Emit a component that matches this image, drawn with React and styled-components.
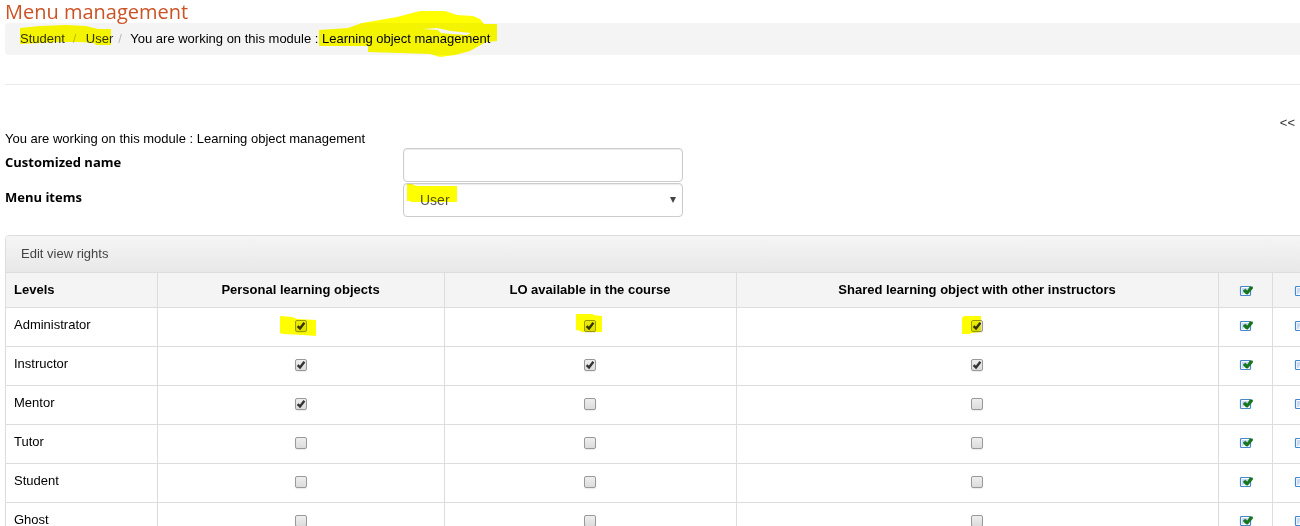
import React, { useState } from "react";
import styled, { createGlobalStyle } from "styled-components";

const GlobalStyle = createGlobalStyle`
  * {
    box-sizing: border-box;
  }
  body {
    margin: 0;
    background: #ffffff;
    color: #000000;
    font-family: "Liberation Sans", Arial, sans-serif;
    font-size: 13px;
    line-height: 20px;
  }
`;

const Page = styled.main`
  padding-left: 5px;
  overflow: hidden;
`;

const Title = styled.h1`
  position: relative;
  z-index: 1;
  margin: 0;
  font-family: "Open Sans", sans-serif;
  font-size: 20px;
  font-weight: 400;
  line-height: 23px;
  color: #cb5326;
`;

const Breadcrumb = styled.nav`
  position: relative;
  display: flex;
  padding: 6px 15px;
  border-radius: 4px 0 0 4px;
  background: #f4f4f4;
`;

const CrumbLink = styled.a`
  color: #333333;
  text-decoration: none;
`;

const Separator = styled.span`
  width: 21px;
  padding-left: ${(props) => (props.$tight ? "5px" : "8px")};
  color: #bbbbbb;
  &:last-of-type {
    width: 17px;
  }
`;

const Divider = styled.hr`
  height: 1px;
  margin: 29px 0 28px;
  border: 0;
  background: #eaeaea;
`;

const Collapse = styled.div`
  display: flex;
  justify-content: flex-end;
  padding-right: 5px;
  height: 15px;
`;

const CollapseLink = styled.a`
  color: #333333;
  line-height: 20px;
  text-decoration: none;
`;

const ModuleText = styled.p`
  margin: 0;
  padding-top: 2px;
  line-height: 18px;
`;

const FieldRow = styled.div`
  display: grid;
  grid-template-columns: 398px 280px;
  padding-bottom: 1px;
`;

const FieldLabel = styled.label`
  padding-top: 4px;
  font-family: "Open Sans", sans-serif;
  font-weight: 700;
`;

const Control = styled.div`
  position: relative;
  display: flex;
`;

const TextInput = styled.input`
  width: 100%;
  height: 34px;
  padding: 6px 12px;
  border: 1px solid #cccccc;
  border-radius: 4px;
  background: #ffffff;
  box-shadow: inset 0 1px 1px rgba(0, 0, 0, 0.08);
  color: #555555;
  font-family: "Liberation Sans", Arial, sans-serif;
  font-size: 14px;
`;

const Select = styled.select`
  width: 100%;
  height: 34px;
  padding: 6px 16px;
  appearance: none;
  border: 1px solid #cccccc;
  border-radius: 4px;
  background: #ffffff;
  box-shadow: inset 0 1px 1px rgba(0, 0, 0, 0.08);
  color: #555555;
  font-family: "Liberation Sans", Arial, sans-serif;
  font-size: 14px;
`;

const SelectArrow = styled.svg`
  position: absolute;
  top: 14px;
  right: 7px;
  width: 6px;
  height: 6px;
  fill: #444444;
  pointer-events: none;
`;

const Panel = styled.section`
  margin: 17px -28px 0 0;
  border: 1px solid #dddddd;
  border-radius: 4px;
`;

const PanelHeading = styled.h2`
  margin: 0;
  padding: 8px 15px;
  border-radius: 4px 4px 0 0;
  background: linear-gradient(#f5f5f5, #e8e8e8);
  color: #444444;
  font-size: 13px;
  font-weight: 400;
  line-height: 20px;
`;

const RightsTable = styled.table`
  width: 100%;
  border-collapse: collapse;
  table-layout: fixed;
`;

const Column = styled.col`
  width: ${(props) => props.$width || "auto"};
`;

const cellBorder = "1px solid #dddddd";

const HeadCell = styled.th`
  height: 35px;
  padding: ${(props) => (props.$icon ? "7px 8px 6px" : "6px 8px 7px")};
  border-top: ${cellBorder};
  border-left: ${cellBorder};
  background: #f4f4f4;
  text-align: ${(props) => (props.$left ? "left" : "center")};
  vertical-align: middle;
  &:first-child {
    border-left: 0;
  }
`;

const LevelCell = styled.th`
  height: 39px;
  padding: 7px 8px;
  border-top: ${cellBorder};
  font-weight: 400;
  text-align: left;
  vertical-align: top;
`;

const Cell = styled.td`
  padding: 0 0 4px;
  border-top: ${cellBorder};
  border-left: ${cellBorder};
  text-align: center;
  vertical-align: middle;
`;

const BoxWrap = styled.span`
  position: relative;
  display: inline-flex;
  vertical-align: middle;
`;

const Box = styled.input`
  width: 12px;
  height: 12px;
  margin: 0;
  appearance: none;
  border: 1px solid #999999;
  border-radius: 2px;
  background: linear-gradient(#eeeeee, #dcdcdc);
  box-shadow: 0 1px 1px rgba(0, 0, 0, 0.08);
`;

const Tick = styled.svg`
  position: absolute;
  top: 0;
  left: 0;
  width: 12px;
  height: 12px;
  fill: none;
  stroke: #333333;
  stroke-width: 2.4;
  pointer-events: none;
`;

const IconButton = styled.button`
  display: inline-flex;
  padding: 0;
  border: 0;
  background: none;
  vertical-align: middle;
`;

// Marker strokes let the content under them show through
const Marker = styled.svg`
  position: absolute;
  top: ${(props) => props.$top}px;
  left: ${(props) => props.$left}px;
  fill: #ffff00;
  mix-blend-mode: multiply;
  pointer-events: none;
`;

const columns = [
  "Personal learning objects",
  "LO available in the course",
  "Shared learning object with other instructors",
];

const levels = [
  { name: "Administrator", rights: [true, true, true] },
  { name: "Instructor", rights: [true, true, true] },
  { name: "Mentor", rights: [true, false, false] },
  { name: "Tutor", rights: [false, false, false] },
  { name: "Student", rights: [false, false, false] },
  { name: "Ghost", rights: [false, false, false] },
];

const boxMarkers = [
  { top: -4, left: -15, points: "0,0 12,1 17,3 36,4 36,20 23,19 3,18 0,17" },
  { top: -6, left: -8, points: "0,0 17,0 17,1 26,2 26,18 5,18 5,17 0,16" },
  { top: -4, left: -9, points: "0,2 2,0 19,0 19,16 9,17 8,18 0,18" },
];

const EmptyBox = () => (
  <>
    <rect x="3.5" y="1.5" width="10" height="9" rx="1" fill="#ffffff" stroke="#4488cb" strokeWidth="1.2" />
    <path d="M5 3h7v6H5z" fill="#c9d9f1" />
    <path d="M8 6h4v3H6z" fill="#e6eefa" />
  </>
);

const CheckAllIcon = () => (
  <svg width="16" height="12" viewBox="0 0 16 12">
    <EmptyBox />
    <path d="M6.6 5.2l2-1 1.8 1.9L13 1.8l2.6.1v1.5L10.6 9.2 9.2 9 6.6 6.4z" fill="#157a1c" stroke="#0c6314" strokeWidth="0.6" />
  </svg>
);

const UncheckAllIcon = () => (
  <svg width="16" height="12" viewBox="0 0 16 12">
    <EmptyBox />
  </svg>
);

const App = () => {
  const [rows, setRows] = useState(levels);

  const setRight = (row, col, value) => {
    setRows(
      rows.map((level, i) =>
        row === null || i === row
          ? { ...level, rights: level.rights.map((r, j) => (col === null || j === col ? value : r)) }
          : level
      )
    );
  };

  return (
    <Page>
      <GlobalStyle />
      <Title>Menu management</Title>
      <Breadcrumb aria-label="Breadcrumb">
        <CrumbLink href="#student">Student</CrumbLink>
        <Separator>/</Separator>
        <CrumbLink href="#user">User</CrumbLink>
        <Separator $tight>/</Separator>
        <div>You are working on this module : Learning object management</div>
        <Marker $top={2} $left={15} width="92" height="21">
          <polygon points="0,3 20,1 46,0 66,1 78,4 91,4 91,20 76,20 74,18 60,17 40,17 0,19" />
        </Marker>
        <Marker $top={-12} $left={314} width="179" height="47">
          <path
            fillRule="evenodd"
            d="M0 19L29 17 43 12 78 6 101 0H126L138 4 154 5 161 8 165 13H178V30L167 31 151 40 136 44 121 46 111 43 49 41V35H0z
              M103 18L118 17 132 20 152 22 148 24 132 23 122 22 119 19z"
          />
        </Marker>
      </Breadcrumb>
      <Divider />
      <Collapse>
        <CollapseLink href="#collapse">&lt;&lt;</CollapseLink>
      </Collapse>
      <ModuleText>You are working on this module : Learning object management</ModuleText>
      <FieldRow>
        <FieldLabel htmlFor="custom-name">Customized name</FieldLabel>
        <Control>
          <TextInput id="custom-name" type="text" />
        </Control>
      </FieldRow>
      <FieldRow>
        <FieldLabel htmlFor="menu-items">Menu items</FieldLabel>
        <Control>
          <Select id="menu-items" defaultValue="User">
            <option>User</option>
          </Select>
          <SelectArrow viewBox="0 0 6 6">
            <path d="M0 0h6L3 6z" />
          </SelectArrow>
          <Marker $top={1} $left={4} width="50" height="19">
            <polygon points="0,0 6,0 6,1 11,2 50,2 50,18 4,18 4,17 0,17" />
          </Marker>
        </Control>
      </FieldRow>
      <Panel>
        <PanelHeading>Edit view rights</PanelHeading>
        <RightsTable>
          <colgroup>
            <Column $width="151px" />
            <Column $width="287px" />
            <Column $width="292px" />
            <Column />
            <Column $width="54px" />
            <Column $width="55px" />
          </colgroup>
          <thead>
            <tr>
              <HeadCell $left scope="col">Levels</HeadCell>
              {columns.map((column) => (
                <HeadCell key={column} scope="col">{column}</HeadCell>
              ))}
              <HeadCell $icon>
                <IconButton type="button" aria-label="Check all" onClick={() => setRight(null, null, true)}>
                  <CheckAllIcon />
                </IconButton>
              </HeadCell>
              <HeadCell $icon>
                <IconButton type="button" aria-label="Uncheck all" onClick={() => setRight(null, null, false)}>
                  <UncheckAllIcon />
                </IconButton>
              </HeadCell>
            </tr>
          </thead>
          <tbody>
            {rows.map((level, i) => (
              <tr key={level.name}>
                <LevelCell scope="row">{level.name}</LevelCell>
                {level.rights.map((checked, j) => (
                  <Cell key={columns[j]}>
                    <BoxWrap>
                      <Box
                        type="checkbox"
                        aria-label={`${level.name}: ${columns[j]}`}
                        checked={checked}
                        onChange={(e) => setRight(i, j, e.target.checked)}
                      />
                      {checked && (
                        <Tick viewBox="0 0 12 12">
                          <path d="M2.6 6.2L5 8.4 9.4 2.8" />
                        </Tick>
                      )}
                      {i === 0 && (
                        <Marker $top={boxMarkers[j].top} $left={boxMarkers[j].left} width="36" height="20">
                          <polygon points={boxMarkers[j].points} />
                        </Marker>
                      )}
                    </BoxWrap>
                  </Cell>
                ))}
                <Cell>
                  <IconButton type="button" aria-label={`Check ${level.name}`} onClick={() => setRight(i, null, true)}>
                    <CheckAllIcon />
                  </IconButton>
                </Cell>
                <Cell>
                  <IconButton type="button" aria-label={`Uncheck ${level.name}`} onClick={() => setRight(i, null, false)}>
                    <UncheckAllIcon />
                  </IconButton>
                </Cell>
              </tr>
            ))}
          </tbody>
        </RightsTable>
      </Panel>
    </Page>
  );
};

export default App;
